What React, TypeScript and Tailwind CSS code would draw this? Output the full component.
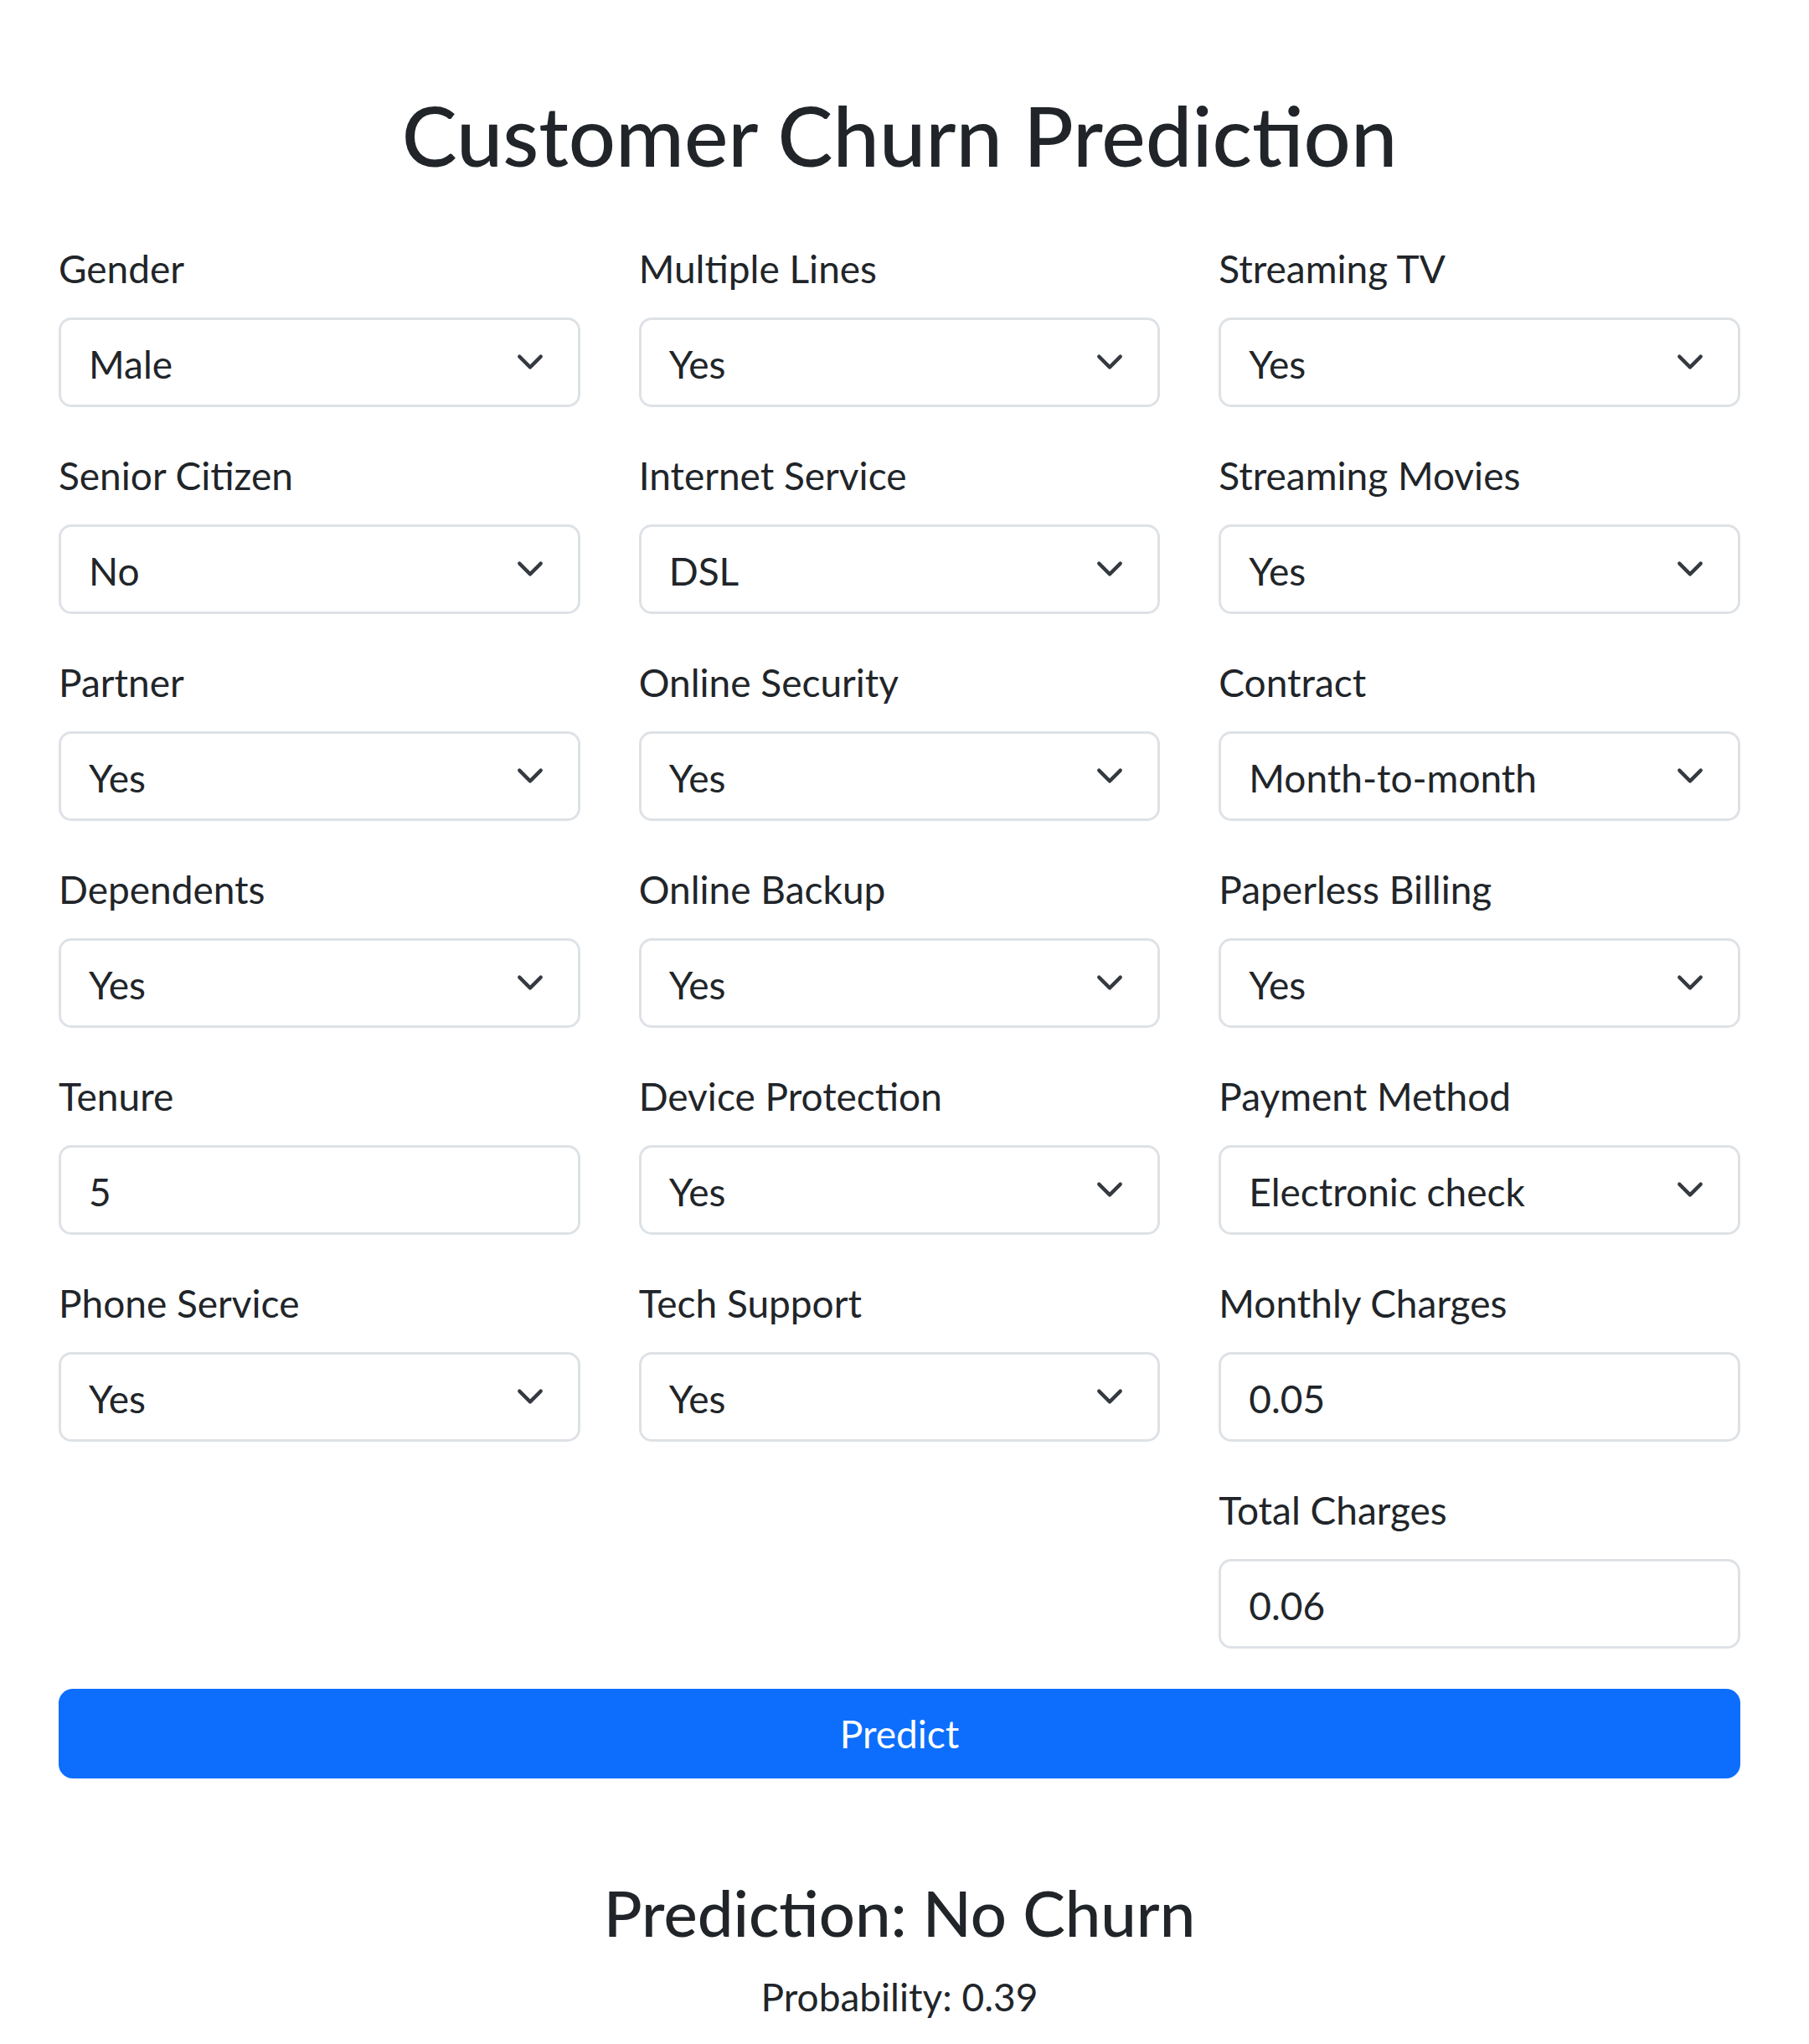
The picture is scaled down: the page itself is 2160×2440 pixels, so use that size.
import React from 'react';

type Field = { label: string; value: string; kind: 'select' | 'input' };

const sel = (label: string, value: string): Field => ({ label, value, kind: 'select' });
const num = (label: string, value: string): Field => ({ label, value, kind: 'input' });

// three independent stacks, as in the original form
const COLUMNS: Field[][] = [
  [
    sel('Gender', 'Male'),
    sel('Senior Citizen', 'No'),
    sel('Partner', 'Yes'),
    sel('Dependents', 'Yes'),
    num('Tenure', '5'),
    sel('Phone Service', 'Yes'),
  ],
  [
    sel('Multiple Lines', 'Yes'),
    sel('Internet Service', 'DSL'),
    sel('Online Security', 'Yes'),
    sel('Online Backup', 'Yes'),
    sel('Device Protection', 'Yes'),
    sel('Tech Support', 'Yes'),
  ],
  [
    sel('Streaming TV', 'Yes'),
    sel('Streaming Movies', 'Yes'),
    sel('Contract', 'Month-to-month'),
    sel('Paperless Billing', 'Yes'),
    sel('Payment Method', 'Electronic check'),
    num('Monthly Charges', '0.05'),
    num('Total Charges', '0.06'),
  ],
];

const Chevron: React.FC = () => (
  <svg width="34" height="34" viewBox="0 0 16 16" fill="none" className="shrink-0 mr-[40px]">
    <path d="m2 5 6 6 6-6" stroke="#343a40" strokeWidth="2" strokeLinecap="round" strokeLinejoin="round" />
  </svg>
);

const FormField: React.FC<{ field: Field }> = ({ field }) => (
  <div className="mb-[48px]">
    <label className="block h-[68px] mb-[24px] text-[46px] leading-[68px]">{field.label}</label>
    <div className="flex items-center justify-between h-[107px] border-[3px] border-[#dee2e6] rounded-[15px] bg-white pl-[33px]">
      <span className="text-[46px] leading-[1.2] pt-[4px]">{field.value}</span>
      {field.kind === 'select' && <Chevron />}
    </div>
  </div>
);

const App: React.FC = () => {
  return (
    <div className="min-h-screen bg-white font-[Lato,sans-serif] text-[#212529]">
      <div className="ml-[70px] w-[2008px] pt-[102px] pb-[40px]">
        <h1 className="text-center text-[99px] leading-[1.2] font-medium mb-[66px]">Customer Churn Prediction</h1>

        <div className="grid grid-cols-3 gap-x-[70px]">
          {COLUMNS.map((col, i) => (
            <div key={i} className="flex flex-col">
              {col.map(f => (
                <FormField key={f.label} field={f} />
              ))}
            </div>
          ))}
        </div>

        <button className="w-full h-[107px] rounded-[17px] bg-[#0d6efd] text-white text-[46px] leading-[1.2]">
          Predict
        </button>

        {/* result */}
        <div className="text-center mt-[114px]">
          <h3 className="text-[76px] leading-[1.2] font-medium mb-[21px]">Prediction: No Churn</h3>
          <p className="text-[46px] leading-[1.5]">Probability: 0.39</p>
        </div>
      </div>
    </div>
  );
};

export default App;
